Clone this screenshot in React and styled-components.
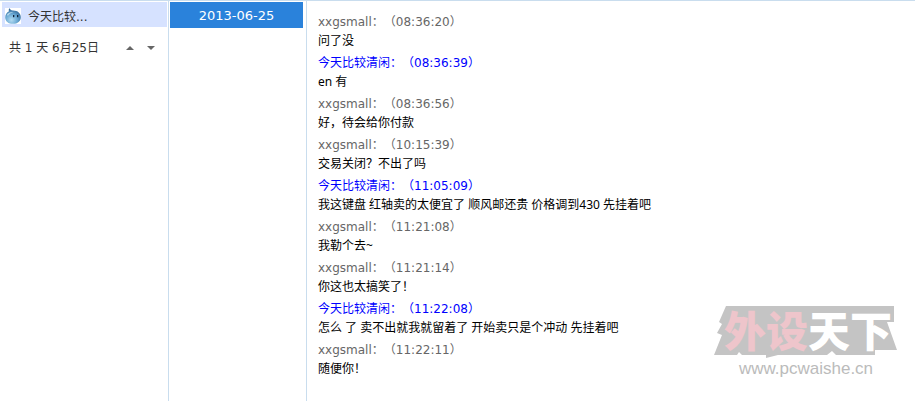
import React, { useState } from "react";
import styled, { createGlobalStyle } from "styled-components";

const COLOR = {
  LINE: "#c9ddee",
  SELECTED: "#d6e2ff",
  BLUE: "#2a82db",
  GRAY: "#666666",
  OWN: "#0000ff",
  WATERMARK: "#c4c4c4",
  PINK: "#eec5cb",
};

const FONT = {
  UI: '"DejaVu Sans", "Noto Sans CJK SC", sans-serif',
  MESSAGE: '"Noto Sans", "Noto Sans CJK SC", sans-serif',
};

const ME = "今天比较清闲";
const OTHER = "xxgsmall";

const MESSAGES = [
  { sender: OTHER, time: "08:36:20", text: "问了没" },
  { sender: ME, time: "08:36:39", text: "en 有" },
  { sender: OTHER, time: "08:36:56", text: "好，待会给你付款" },
  { sender: OTHER, time: "10:15:39", text: "交易关闭？不出了吗" },
  {
    sender: ME,
    time: "11:05:09",
    text: "我这键盘 红轴卖的太便宜了 顺风邮还贵 价格调到430 先挂着吧",
  },
  { sender: OTHER, time: "11:21:08", text: "我勒个去~" },
  { sender: OTHER, time: "11:21:14", text: "你这也太搞笑了！" },
  {
    sender: ME,
    time: "11:22:08",
    text: "怎么 了 卖不出就我就留着了 开始卖只是个冲动 先挂着吧",
  },
  { sender: OTHER, time: "11:22:11", text: "随便你！" },
];

const DATES = ["2013-06-25"];

function Avatar() {
  return (
    <AvatarImage viewBox="0 0 16 16" aria-hidden="true">
      <defs>
        <radialGradient id="drop" cx="0.4" cy="0.75" r="0.7">
          <stop offset="0" stopColor="#b4dcf2" />
          <stop offset="0.55" stopColor="#69a8d3" />
          <stop offset="1" stopColor="#346a9b" />
        </radialGradient>
      </defs>
      <rect width="16" height="16" fill="#ffffff" />
      <path
        d="M4.6 0.3 C5 1.5 6 2.2 7.8 2.5 C12.7 2.4 15.8 5.3 15.8 9.2 C15.8 13.2 12.6 15.8 8 15.8 C3.4 15.8 0.2 13.2 0.2 9.4 C0.2 6.7 1.7 4.4 4 3.3 C3.5 2.2 3.7 1 4.6 0.3 Z"
        fill="url(#drop)"
      />
      <path
        d="M2 6.6 C3.5 4.3 6 3.6 8.5 4 C6 4.8 4 6 2.8 8 Z"
        fill="#d5edf8"
        opacity="0.7"
      />
      <rect x="8" y="7" width="1.3" height="2.2" fill="#10243c" />
      <rect x="12" y="7" width="1.3" height="2.2" fill="#10243c" />
    </AvatarImage>
  );
}

function Watermark() {
  return (
    <WatermarkContainer>
      <WatermarkPlate viewBox="0 0 184 54" aria-hidden="true">
        <path
          d="M12 1 H180 V17 H173 L183 45 H161 V50 H122 L118 46 L113 50 H64 L52 53 V50 H28 L25 47 L23 50 H0 L8 30 L3 28 L8 19 L5 17 Z"
          fill={COLOR.WATERMARK}
        />
      </WatermarkPlate>
      <WatermarkTitle>
        <span>外设</span>天下
      </WatermarkTitle>
      <WatermarkUrl>www.pcwaishe.cn</WatermarkUrl>
    </WatermarkContainer>
  );
}

export default function App() {
  const [selectedDate, setSelectedDate] = useState(DATES[0]);

  return (
    <>
      <GlobalStyle />
      <Page>
        <Sidebar>
          <ContactButton type="button">
            <Avatar />
            今天比较...
          </ContactButton>
          <Summary>
            <span>共 1 天 6月25日</span>
            <ArrowButtons>
              <ArrowButton type="button" aria-label="上一天">
                <svg width="8" height="4" viewBox="0 0 8 4">
                  <path d="M4 0 L8 4 H0 Z" fill="currentColor" />
                </svg>
              </ArrowButton>
              <ArrowButton type="button" aria-label="下一天">
                <svg width="8" height="4" viewBox="0 0 8 4">
                  <path d="M0 0 H8 L4 4 Z" fill="currentColor" />
                </svg>
              </ArrowButton>
            </ArrowButtons>
          </Summary>
        </Sidebar>
        <DateColumn>
          {DATES.map((date) => (
            <DateButton
              key={date}
              type="button"
              $selected={date === selectedDate}
              onClick={() => setSelectedDate(date)}
            >
              {date}
            </DateButton>
          ))}
        </DateColumn>
        <History>
          <MessageList>
            {MESSAGES.map(({ sender, time, text }) => (
              <li key={time}>
                <MessageHead $own={sender === ME}>
                  {sender}：（{time}）
                </MessageHead>
                <MessageText>{text}</MessageText>
              </li>
            ))}
          </MessageList>
          <Watermark />
        </History>
      </Page>
    </>
  );
}

const GlobalStyle = createGlobalStyle`
  * {
    box-sizing: border-box;
  }

  body {
    margin: 0;
    background-color: #ffffff;
    font: 12px ${FONT.UI};
    text-spacing-trim: space-all;
  }

  button {
    border: 0;
    padding: 0;
    background: none;
    color: inherit;
    font: inherit;
    cursor: pointer;
  }
`;

const Page = styled.div`
  display: grid;
  grid-template-columns: 169px 138px 1fr;
  min-height: 100vh;
  border-top: 1px solid ${COLOR.LINE};
`;

const Sidebar = styled.aside`
  padding: 1px 1px 0 2px;
  border-right: 1px solid ${COLOR.LINE};
  color: #333333;
`;

const ContactButton = styled.button`
  display: flex;
  align-items: center;
  gap: 7px;
  width: 100%;
  height: 25px;
  padding: 2px 3px 0;
  background-color: ${COLOR.SELECTED};
`;

const AvatarImage = styled.svg`
  width: 16px;
  height: 16px;
`;

const Summary = styled.div`
  display: flex;
  justify-content: space-between;
  align-items: center;
  padding: 12px 8px 0 7px;
  line-height: 18px;
  white-space: nowrap;
`;

const ArrowButtons = styled.div`
  display: flex;
  gap: 5px;
`;

const ArrowButton = styled.button`
  display: flex;
  justify-content: center;
  align-items: center;
  width: 16px;
  height: 16px;
  color: ${COLOR.GRAY};
`;

const DateColumn = styled.nav`
  padding: 1px 3px 0 1px;
  border-right: 1px solid ${COLOR.LINE};
`;

const DateButton = styled.button`
  width: 100%;
  height: 26px;
  font-size: 13px;
  color: ${(props) => (props.$selected ? "#ffffff" : "#333333")};
  background-color: ${(props) => (props.$selected ? COLOR.BLUE : "#ffffff")};
`;

const History = styled.main`
  position: relative;
  padding: 11px;
`;

const MessageList = styled.ol`
  margin: 0;
  padding: 0;
  list-style: none;
`;

const MessageHead = styled.div`
  line-height: 20px;
  color: ${(props) => (props.$own ? COLOR.OWN : COLOR.GRAY)};
`;

const MessageText = styled.p`
  margin: 0 0 3px;
  font-family: ${FONT.MESSAGE};
  line-height: 18px;
  color: #000000;
`;

const WatermarkContainer = styled.div`
  position: absolute;
  right: 17px;
  bottom: 22px;
  width: 184px;
  pointer-events: none;
`;

const WatermarkPlate = styled.svg`
  display: block;
  width: 184px;
  height: 54px;
`;

const WatermarkTitle = styled.div`
  position: absolute;
  top: 0;
  left: 10px;
  font: 900 42px/48px "Noto Sans CJK SC", sans-serif;
  color: #ffffff;
  white-space: nowrap;

  span {
    color: ${COLOR.PINK};
  }
`;

const WatermarkUrl = styled.div`
  font: 17px/20px "Liberation Sans", Arial, sans-serif;
  text-align: center;
  color: #bbbbbb;
`;
